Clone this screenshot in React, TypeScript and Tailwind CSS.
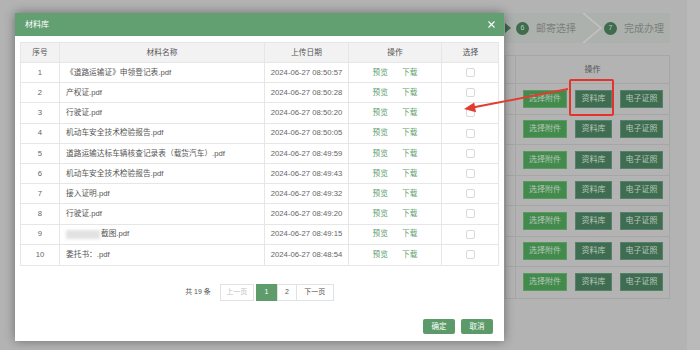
import React from 'react';

const files = [
  { no: 1, name: '《道路运输证》申领登记表.pdf', date: '2024-06-27 08:50:57' },
  { no: 2, name: '产权证.pdf', date: '2024-06-27 08:50:28' },
  { no: 3, name: '行驶证.pdf', date: '2024-06-27 08:50:20' },
  { no: 4, name: '机动车安全技术检验报告.pdf', date: '2024-06-27 08:50:05' },
  { no: 5, name: '道路运输达标车辆核查记录表（载货汽车）.pdf', date: '2024-06-27 08:49:59' },
  { no: 6, name: '机动车安全技术检验报告.pdf', date: '2024-06-27 08:49:43' },
  { no: 7, name: '接入证明.pdf', date: '2024-06-27 08:49:32' },
  { no: 8, name: '行驶证.pdf', date: '2024-06-27 08:49:20' },
  { no: 9, name: '截图.pdf', date: '2024-06-27 08:49:15', blurred: true },
  { no: 10, name: '委托书：.pdf', date: '2024-06-27 08:48:54' },
];

const cols = 'grid grid-cols-[39px_205px_84px_93px_57px]';

const PageBehind = () => (
  <div className="pl-[505px] pt-[13px]">
    {/* steps */}
    <div className="flex items-center h-[30px] w-[165px] bg-[#adb1ad] text-[10px] text-[#7a7f7b]">
      <div className="w-0 h-0 border-y-[5px] border-y-transparent border-l-[6px] border-l-[#3d6a4b]" />
      <div className="ml-[5px] w-[13px] h-[13px] rounded-full bg-[#3f6c4c] text-[#c0cac2] text-[7px] flex items-center justify-center">6</div>
      <span className="ml-[7px]">邮寄选择</span>
      <svg width="22" height="30" viewBox="0 0 22 30" className="ml-[6px]">
        <polyline points="1,0 19,15 1,30" fill="none" stroke="#c2c5c2" strokeWidth="1.5" />
      </svg>
      <div className="w-[13px] h-[13px] rounded-full bg-[#3f6c4c] text-[#c0cac2] text-[7px] flex items-center justify-center">7</div>
      <span className="ml-[7px]">完成办理</span>
    </div>

    {/* table */}
    <div className="mt-[12px] w-[165px] border border-[#a6a6a6]">
      <div className="flex h-[28px] border-b border-[#a6a6a6]">
        <div className="w-[10px] border-r border-[#a6a6a6]" />
        <div className="flex-1 flex items-center justify-center text-[8px] text-[#555]">操作</div>
      </div>
      {Array.from({ length: 7 }).map((_, i) => (
        <div key={i} className="flex h-[30.5px] border-b border-[#a6a6a6] last:border-b-0">
          <div className="w-[10px] border-r border-[#a6a6a6]" />
          <div className="flex-1 flex items-center pl-[7px] gap-[8px] text-[8px] text-[#b9c6bb]">
            <div className="w-[44px] h-[18px] bg-[#428b4c] border border-[#5a9a62] flex items-center justify-center">选择附件</div>
            <div className="w-[37px] h-[18px] bg-[#3f6d51] border border-[#56806a] flex items-center justify-center">资料库</div>
            <div className="w-[43px] h-[18px] bg-[#3f6d51] border border-[#56806a] flex items-center justify-center">电子证照</div>
          </div>
        </div>
      ))}
    </div>
  </div>
);

const Modal = () => (
  <div className="absolute left-[15px] top-[13px] w-[489px] h-[328px] bg-white shadow-[0_0_10px_rgba(0,0,0,0.4)] flex flex-col">
    <div className="h-[23px] bg-[#62a072] flex items-center justify-between pl-[10px] pr-[9px] text-white">
      <span className="text-[8px]">材料库</span>
      <svg width="7" height="7" viewBox="0 0 7 7">
        <path d="M0.5 0.5 L6.5 6.5 M6.5 0.5 L0.5 6.5" stroke="#ffffff" strokeWidth="1.1" />
      </svg>
    </div>

    <div className="px-[5px] pt-[6px]">
      <div className="border border-[#e6e6e6] text-[7.7px] text-[#555]">
        <div className={`${cols} h-[20px] bg-[#f2f2f2] border-b border-[#e6e6e6]`}>
          <div className="flex items-center justify-center border-r border-[#e6e6e6]">序号</div>
          <div className="flex items-center justify-center border-r border-[#e6e6e6]">材料名称</div>
          <div className="flex items-center justify-center border-r border-[#e6e6e6]">上传日期</div>
          <div className="flex items-center justify-center border-r border-[#e6e6e6]">操作</div>
          <div className="flex items-center justify-center">选择</div>
        </div>
        {files.map((f) => (
          <div key={f.no} className={`${cols} h-[20.2px] border-b border-[#e6e6e6] last:border-b-0`}>
            <div className="flex items-center justify-center border-r border-[#e6e6e6] text-[#666]">{f.no}</div>
            <div className="flex items-center pl-[6px] border-r border-[#e6e6e6] whitespace-nowrap overflow-hidden">
              {f.blurred && <div className="w-[34px] h-[9px] mr-[1px] bg-[#e2e2e2] blur-[1.5px]" />}
              {f.name}
            </div>
            <div className="flex items-center justify-center border-r border-[#e6e6e6] text-[#666]">{f.date}</div>
            <div className="flex items-center justify-center gap-[14px] border-r border-[#e6e6e6] text-[#62a06f]">
              <span>预览</span>
              <span>下载</span>
            </div>
            <div className="flex items-center justify-center">
              <div className="w-[9px] h-[9px] border border-[#d9d9d9] rounded-[2px] bg-white" />
            </div>
          </div>
        ))}
      </div>
    </div>

    <div className="mt-[18px] flex items-center justify-center text-[7px] text-[#555]">
      <span className="mr-[9px]">共 19 条</span>
      <div className="w-[34px] h-[17px] border border-[#e2e2e2] flex items-center justify-center text-[#c2c2c2]">上一页</div>
      <div className="ml-[2px] w-[21px] h-[17px] bg-[#5f9c6b] text-white flex items-center justify-center">1</div>
      <div className="w-[20px] h-[17px] border border-[#e2e2e2] flex items-center justify-center">2</div>
      <div className="w-[37px] h-[17px] border border-l-0 border-[#e2e2e2] flex items-center justify-center">下一页</div>
    </div>

    <div className="mt-auto flex justify-end gap-[6px] pr-[11px] pb-[7px]">
      <button className="w-[32px] h-[15px] bg-[#5c9b69] text-white text-[7.5px] rounded-[2px]">确定</button>
      <button className="w-[32px] h-[15px] bg-[#5c9b69] text-white text-[7.5px] rounded-[2px]">取消</button>
    </div>
  </div>
);

export default function App() {
  return (
    <div className="relative w-[700px] h-[350px] overflow-hidden bg-[#b3b3b3] font-['Liberation_Sans','Noto_Sans_CJK_SC',sans-serif]">
      <div className="absolute right-0 top-0 w-[13px] h-full bg-[#bababa]" />
      <PageBehind />
      <Modal />

      {/* highlight box */}
      <div className="absolute left-[569px] top-[79px] w-[45px] h-[37px] border-2 border-[#e2342b] rounded-[2px]" />

      {/* arrow */}
      <svg className="absolute left-0 top-0 pointer-events-none" width="700" height="350" viewBox="0 0 700 350">
        <line x1="568" y1="89" x2="474" y2="107.3" stroke="#e33b30" strokeWidth="2" />
        <polygon points="464,109 474.2,102.6 476,112.2" fill="#e33b30" />
      </svg>
    </div>
  );
}
